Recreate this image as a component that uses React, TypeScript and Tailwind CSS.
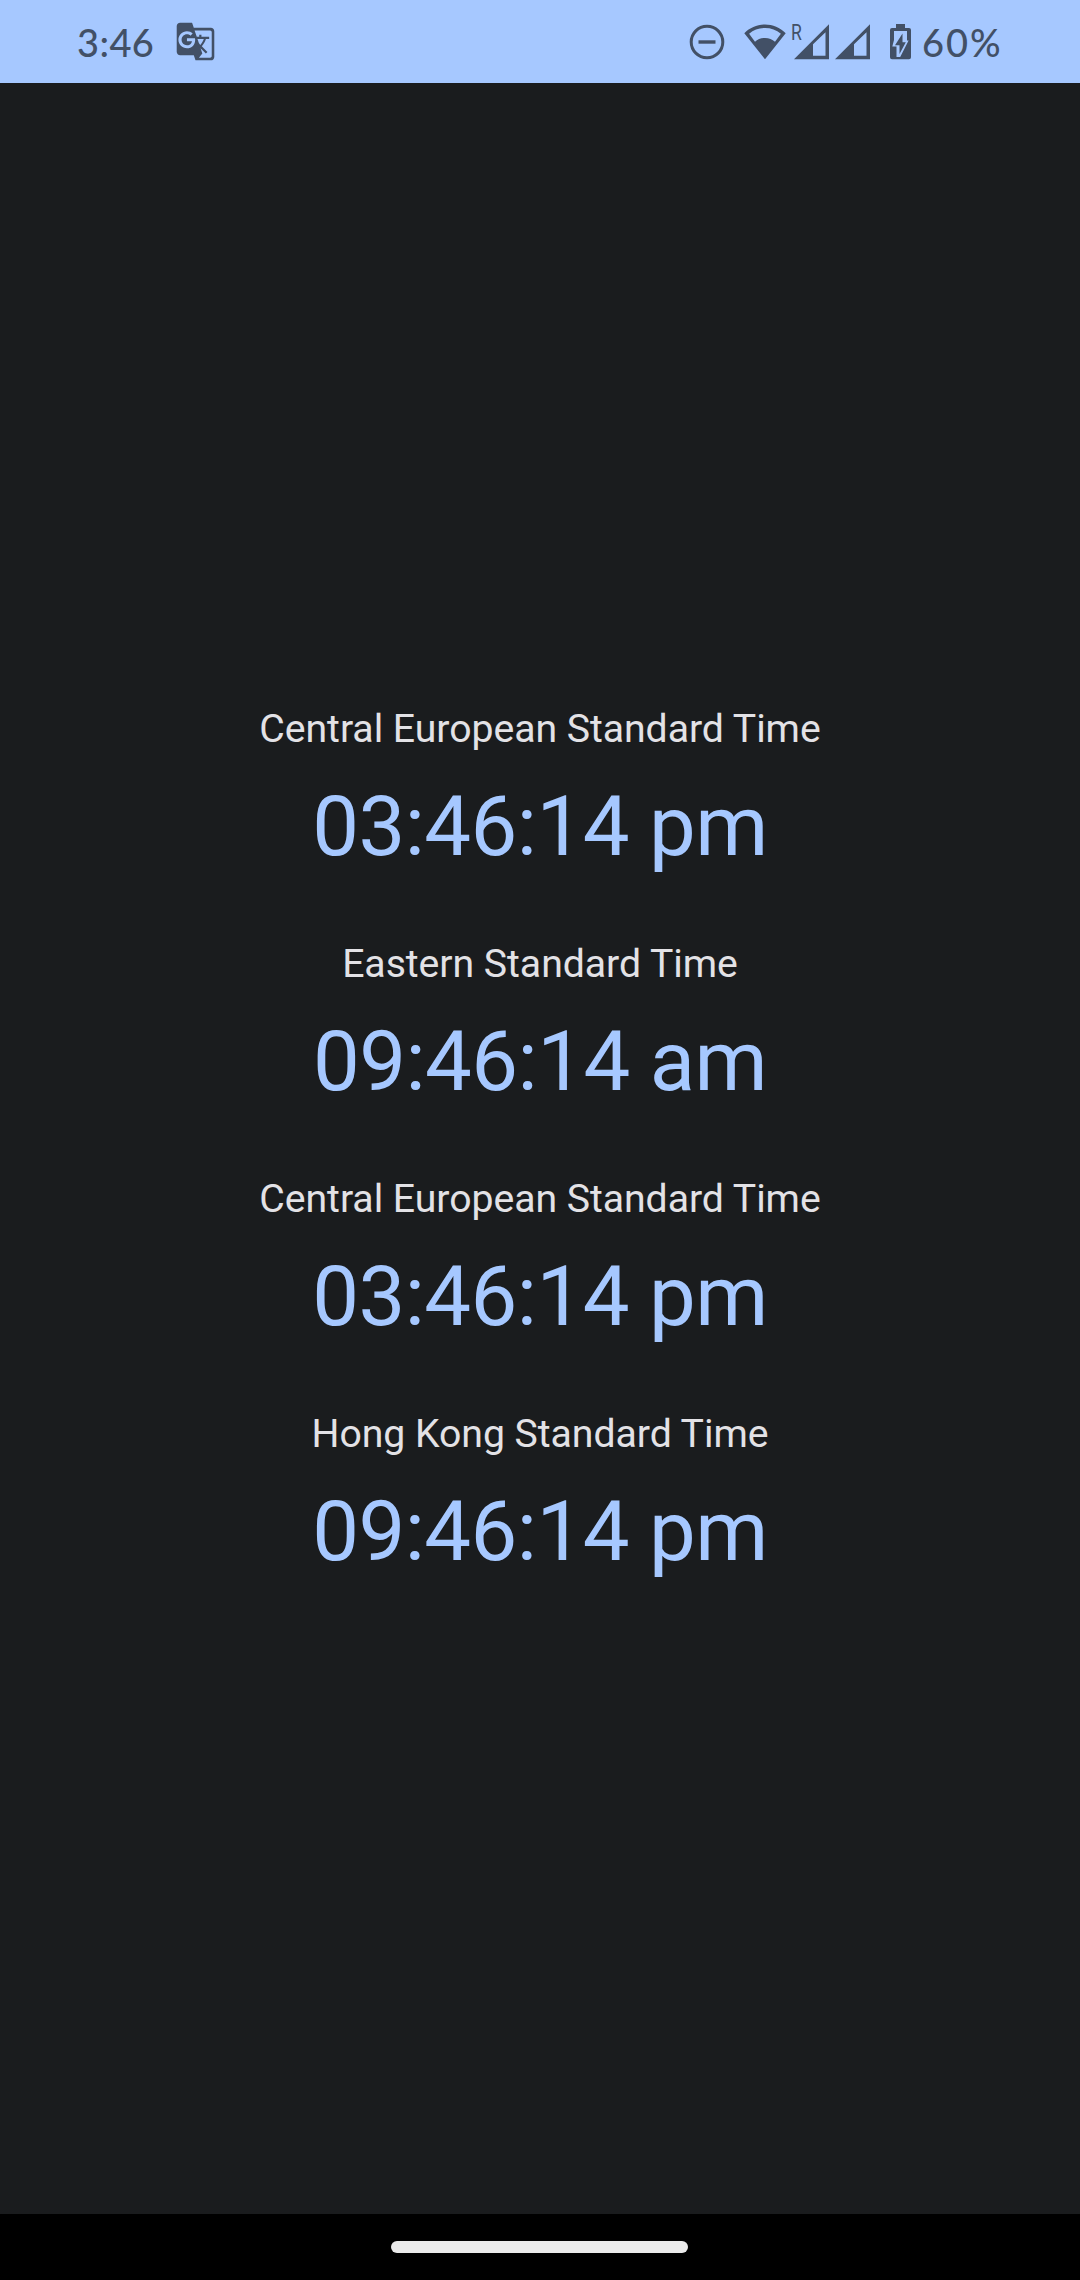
import { MdGTranslate } from "react-icons/md";

const clocks = [
  { zone: "Central European Standard Time", time: "03:46:14 pm" },
  { zone: "Eastern Standard Time", time: "09:46:14 am" },
  { zone: "Central European Standard Time", time: "03:46:14 pm" },
  { zone: "Hong Kong Standard Time", time: "09:46:14 pm" },
];

function DoNotDisturb() {
  return (
    <svg className="h-9 w-9" viewBox="0 0 36 36" fill="none" stroke="currentColor">
      <circle cx="18" cy="18" r="15.8" strokeWidth="3" />
      <path d="M9.5 18h17" strokeWidth="3.4" />
    </svg>
  );
}

function Wifi() {
  return (
    <svg className="ml-[19px] h-9 w-[42px]" viewBox="0 0 42 36" fill="currentColor">
      <path
        fillRule="evenodd"
        d="M21 35.2.3 9.2C6 3.6 13.2.5 21 .5s15 3.1 20.7 8.7L21 35.2zM11 17.7C13.600 15.200 17 13.900 21 13.900s7.400 1.300 10 3.800l5.900-8C32.400 6 27 4 21 4S9.600 6 5.100 9.700z"
      />
    </svg>
  );
}

function Signal() {
  return (
    <svg className="h-9 w-[35px]" viewBox="0 0 35 36" fill="currentColor">
      <path fillRule="evenodd" d="M0 35.300 35 .3v35zM19 20.300V31.800H31.500V8.300z" />
    </svg>
  );
}

function Battery() {
  return (
    <svg className="ml-[20px] h-9 w-[21px]" viewBox="0 0 21 36" fill="currentColor">
      <path
        fillRule="evenodd"
        d="M6 0h9v4h4a2 2 0 0 1 2 2v27.300a2 2 0 0 1-2 2H2a2 2 0 0 1-2-2V6a2 2 0 0 1 2-2h4zM4 7v9L2.300 22.500H6.500V33H10.200L18.600 16.500H17V7H14L10.500 7z"
      />
      <path d="M12.500 9.500v8.800h3.300L9.500 30v-8.800H5z" />
    </svg>
  );
}

function StatusBar() {
  return (
    <header className="flex h-[83px] shrink-0 items-center bg-[#a6c8ff] pr-[76px] pl-[77px] text-[#425066]">
      <span className="w-[98px] font-[Lato,sans-serif] text-[38px] leading-none font-medium tracking-[0.4px]">3:46</span>
      <MdGTranslate className="h-[41px] w-[41px]" />
      <div className="ml-auto flex items-center">
        <DoNotDisturb />
        <Wifi />
        <div className="relative ml-[8px] flex gap-[6px]">
          <span className="absolute -top-[4px] -left-[3px] origin-left scale-x-80 font-[Roboto,sans-serif] text-[22px] leading-[26px]">
            R
          </span>
          <Signal />
          <Signal />
        </div>
        <Battery />
        <span className="ml-[11px] w-[82px] font-[Lato,sans-serif] text-[38px] leading-none font-medium tracking-[2px]">
          60%
        </span>
      </div>
    </header>
  );
}

export default function App() {
  return (
    <div className="flex h-[2280px] w-[1080px] flex-col overflow-hidden bg-[#1a1c1e] font-[Roboto,sans-serif]">
      <StatusBar />
      <main className="flex flex-1 flex-col items-center justify-center">
        {clocks.map((clock, index) => (
          <section key={index} className="flex h-[235px] flex-col items-center gap-[25px] pt-[26px] whitespace-nowrap">
            <h2 className="text-[39.2px] leading-[48px] tracking-[-0.04px] text-[#e3e2e6]">{clock.zone}</h2>
            <p className="text-[83.3px] leading-[98px] tracking-[-0.55px] text-[#a6c8ff]">{clock.time}</p>
          </section>
        ))}
      </main>
      <footer className="flex h-[66px] shrink-0 items-center justify-center bg-black pr-px">
        <div className="h-[12px] w-[297px] rounded-full bg-[#ebebeb]" />
      </footer>
    </div>
  );
}
